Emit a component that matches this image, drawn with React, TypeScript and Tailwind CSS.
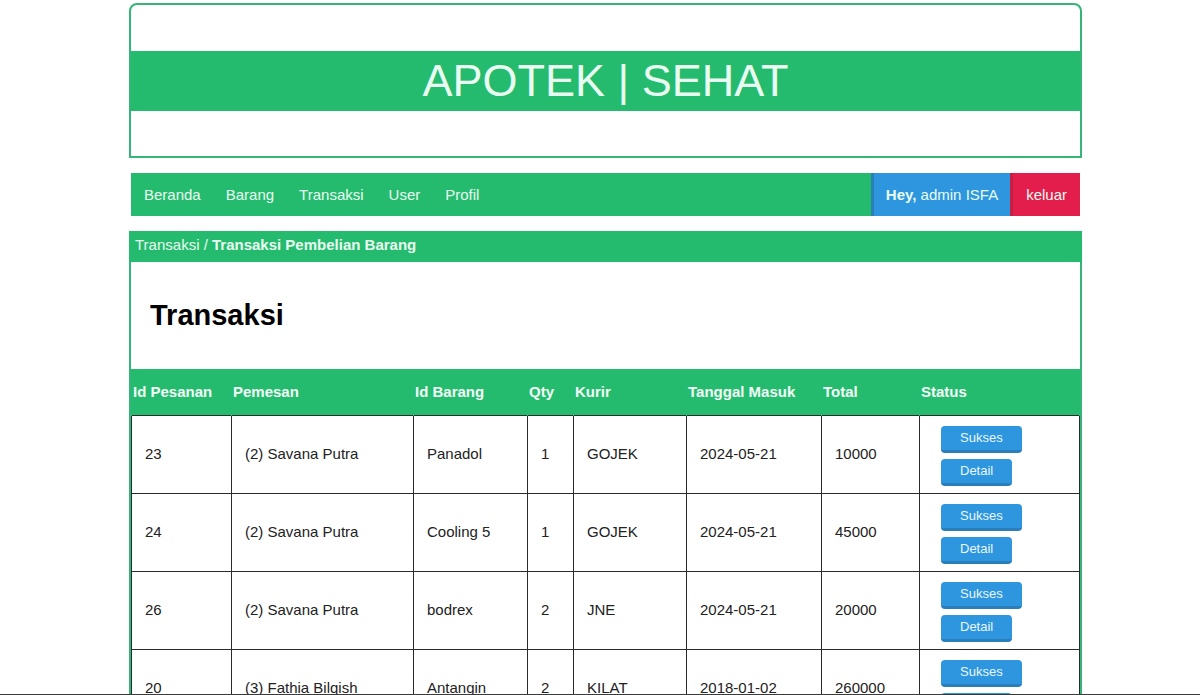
type Order = {
  id: number;
  customer: string;
  item: string;
  qty: number;
  courier: string;
  date: string;
  total: number;
};

const orders: Order[] = [
  { id: 23, customer: "(2) Savana Putra", item: "Panadol", qty: 1, courier: "GOJEK", date: "2024-05-21", total: 10000 },
  { id: 24, customer: "(2) Savana Putra", item: "Cooling 5", qty: 1, courier: "GOJEK", date: "2024-05-21", total: 45000 },
  { id: 26, customer: "(2) Savana Putra", item: "bodrex", qty: 2, courier: "JNE", date: "2024-05-21", total: 20000 },
  { id: 20, customer: "(3) Fathia Bilqish", item: "Antangin", qty: 2, courier: "KILAT", date: "2018-01-02", total: 260000 },
];

const menu = ["Beranda", "Barang", "Transaksi", "User", "Profil"];

const columns = [
  { label: "Id Pesanan", width: "w-[100px]" },
  { label: "Pemesan", width: "w-[182px]" },
  { label: "Id Barang", width: "w-[114px]" },
  { label: "Qty", width: "w-[46px]" },
  { label: "Kurir", width: "w-[113px]" },
  { label: "Tanggal Masuk", width: "w-[135px]" },
  { label: "Total", width: "w-[98px]" },
  { label: "Status", width: "w-auto" },
];

function ActionButton({ label }: { label: string }) {
  return (
    <button
      type="button"
      className="h-[27px] rounded border-b-[3px] border-[#2a7fba] bg-[#2d96df] px-[19px] text-[13px] leading-6 text-[#eaf6fe]"
    >
      {label}
    </button>
  );
}

function Masthead() {
  return (
    <header className="rounded-t-lg border-2 border-[#35b577] pt-[46px] pb-[45px]">
      <div className="bg-[#24bb6e] text-center text-[45px] leading-[60px] text-[#e9fcf1]">APOTEK | SEHAT</div>
    </header>
  );
}

function NavBar() {
  return (
    <nav className="mx-[2px] flex h-[43px] items-stretch bg-[#24bb6e] text-[#e9fcf1]">
      <div className="flex items-center gap-[25px] pl-[13px]">
        {menu.map((label) => (
          <a key={label} href="#">
            {label}
          </a>
        ))}
      </div>
      <a href="#" className="ml-auto flex items-center border-l-[3px] border-[#2a7fba] bg-[#2d96df] px-3">
        <span>
          <b>Hey,</b> admin ISFA
        </span>
      </a>
      <a href="#" className="flex items-center border-l-[3px] border-[#c41f45] bg-[#e41e4c] px-[13px]">
        keluar
      </a>
    </nav>
  );
}

function OrdersTable() {
  return (
    <table className="w-full table-fixed border-collapse text-left">
      <thead>
        <tr className="h-[46px] bg-[#24bb6e] text-[#f2fdf7]">
          {columns.map((column) => (
            <th
              key={column.label}
              scope="col"
              className={`${column.width} border-x border-[#24bb6e] px-px font-bold whitespace-nowrap`}
            >
              {column.label}
            </th>
          ))}
        </tr>
      </thead>
      <tbody className="text-[#222222] [&_td]:border [&_td]:border-[#2b2b2b] [&_td]:px-[13px]">
        {orders.map((order) => (
          <tr key={order.id} className="h-[78px]">
            <td>{order.id}</td>
            <td>{order.customer}</td>
            <td>{order.item}</td>
            <td>{order.qty}</td>
            <td>{order.courier}</td>
            <td>{order.date}</td>
            <td>{order.total}</td>
            <td>
              <div className="flex flex-col items-start gap-[6px] pt-1 pl-2">
                <ActionButton label="Sukses" />
                <ActionButton label="Detail" />
              </div>
            </td>
          </tr>
        ))}
      </tbody>
    </table>
  );
}

export default function App() {
  return (
    <div className="h-screen overflow-y-auto border-b border-[#3a3a3a] bg-white font-['Liberation_Sans',Arial,sans-serif] text-[15px] leading-5 [scrollbar-width:none]">
      <div className="flex flex-col gap-[15px] pt-[3px] pr-[118px] pb-4 pl-[129px]">
        <Masthead />
        <NavBar />
        <main className="border-2 border-t-0 border-[#35b577]">
          <div className="-mx-[2px] bg-[#24bb6e] px-[6px] pt-1 pb-[7px] text-[#e9fcf1]">
            <a href="#">Transaksi</a> / <b>Transaksi Pembelian Barang</b>
          </div>
          <h1 className="px-[19px] pt-[33px] pb-[34px] text-[29px] leading-10 font-bold text-black">Transaksi</h1>
          <OrdersTable />
        </main>
      </div>
    </div>
  );
}
